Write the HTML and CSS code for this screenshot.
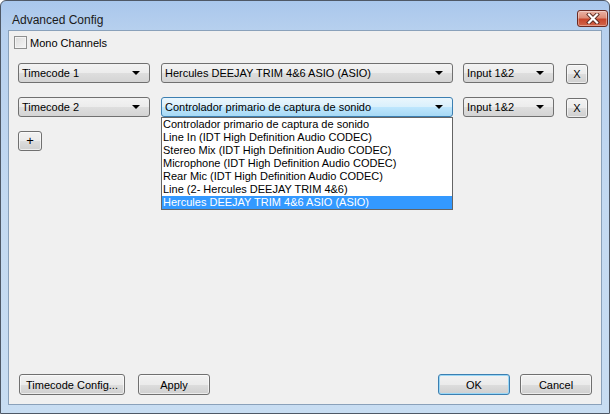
FILE: index.html
```html
<!DOCTYPE html>
<html>
<head>
<meta charset="utf-8">
<link rel="stylesheet" href="styles.css">
</head>
<body>
<div class="window">
  <div class="titlebar">
    <span class="title">Advanced Config</span>
    <div class="close">
      <svg width="16" height="11" viewBox="0 0 16 11">
        <path d="M4 1.5 L12 9.5 M12 1.5 L4 9.5" stroke="#5a2a22" stroke-width="4" stroke-linecap="square"/>
        <path d="M4 1.5 L12 9.5 M12 1.5 L4 9.5" stroke="#ffffff" stroke-width="2.2" stroke-linecap="square"/>
      </svg>
    </div>
  </div>
  <div class="client">
    <label class="check"><span class="box"></span>Mono Channels</label>

    <div class="row">
      <div class="combo c-tc"><span class="val">Timecode 1</span><i class="arrow"></i></div>
      <div class="combo c-dev"><span class="val">Hercules DEEJAY TRIM 4&amp;6 ASIO (ASIO)</span><i class="arrow"></i></div>
      <div class="combo c-in"><span class="val">Input 1&amp;2</span><i class="arrow"></i></div>
      <div class="btn xbtn">X</div>
    </div>

    <div class="row">
      <div class="combo c-tc"><span class="val">Timecode 2</span><i class="arrow"></i></div>
      <div class="combo c-dev open"><span class="val">Controlador primario de captura de sonido</span><i class="arrow"></i>
        <ul class="list">
          <li>Controlador primario de captura de sonido</li>
          <li>Line In (IDT High Definition Audio CODEC)</li>
          <li>Stereo Mix (IDT High Definition Audio CODEC)</li>
          <li>Microphone (IDT High Definition Audio CODEC)</li>
          <li>Rear Mic (IDT High Definition Audio CODEC)</li>
          <li>Line (2- Hercules DEEJAY TRIM 4&amp;6)</li>
          <li class="sel">Hercules DEEJAY TRIM 4&amp;6 ASIO (ASIO)</li>
        </ul>
      </div>
      <div class="combo c-in"><span class="val">Input 1&amp;2</span><i class="arrow"></i></div>
      <div class="btn xbtn">X</div>
    </div>

    <div class="btn plus">+</div>

    <div class="footer">
      <div class="left">
        <div class="btn b-tcc">Timecode Config...</div>
        <div class="btn b-apply">Apply</div>
      </div>
      <div class="right">
        <div class="btn b-ok default">OK</div>
        <div class="btn b-cancel">Cancel</div>
      </div>
    </div>
  </div>
</div>
</body>
</html>
```

FILE: styles.css
```css
* { box-sizing: border-box; }
html, body { margin: 0; padding: 0; }
body {
  width: 610px;
  height: 414px;
  overflow: hidden;
  background: #ffffff;
  font-family: "Liberation Sans", Arial, sans-serif;
  font-size: 11px;
  color: #000;
}
.window {
  width: 610px;
  height: 414px;
  border: 1px solid #4e5866;
  border-radius: 6px 6px 0 0;
  background: linear-gradient(180deg, #a9c7ec 0px, #b7d0ee 30px, #c3d9f1 200px, #c8ddf2 414px);
  padding: 0 7px 8px 7px;
  display: flex;
  flex-direction: column;
}
.titlebar {
  height: 29px;
  flex: none;
  display: flex;
  align-items: flex-start;
  justify-content: space-between;
}
.title {
  font-family: "Liberation Sans", Arial, sans-serif;
  font-size: 12px;
  margin: 12px 0 0 4px;
  color: #1a1a1a;
}
.close {
  width: 31px;
  height: 17px;
  margin: 9px -6px 0 0;
  border: 1px solid #6b2a22;
  border-radius: 3px;
  background: linear-gradient(180deg, #eab3a6 0%, #dd8d78 45%, #c8462c 55%, #d2654a 100%);
  box-shadow: inset 0 0 0 1px rgba(255,255,255,0.35);
  display: flex;
  align-items: center;
  justify-content: center;
}
.client {
  flex: 1;
  background: #f0f0f0;
  border: 1px solid #8aa1ba;
  padding: 5px 9px 9px 9px;
  display: flex;
  flex-direction: column;
}
.check {
  display: flex;
  align-items: center;
  height: 13px;
  margin-left: -4px;
  gap: 3px;
}
.box {
  width: 13px;
  height: 13px;
  border: 1px solid #8e8f8f;
  background: linear-gradient(135deg, #dcdcdc, #f6f6f6);
  box-shadow: inset 0 0 0 1px #f4f4f4;
}
.row {
  display: flex;
  align-items: flex-start;
  margin-top: 14px;
  height: 20px;
}
.combo {
  position: relative;
  height: 20px;
  border: 1px solid #707070;
  border-radius: 3px;
  background: linear-gradient(180deg, #f3f3f3 0%, #ececec 50%, #dedede 51%, #d4d4d4 100%);
  display: flex;
  align-items: center;
  padding-left: 3px;
}
.combo .val { line-height: 18px; white-space: nowrap; }
.arrow {
  position: absolute;
  right: 9px;
  top: 7px;
  width: 0;
  height: 0;
  border-left: 4px solid transparent;
  border-right: 4px solid transparent;
  border-top: 4px solid #000;
}
.c-tc { width: 132px; }
.c-dev { width: 292px; margin-left: 11px; }
.c-in { width: 91px; margin-left: 10px; }
.combo.open {
  border-color: #3c7fb1;
  background: linear-gradient(180deg, #eaf6fd 0%, #d9f0fc 50%, #bee6fd 51%, #a7d9f5 100%);
}
.list {
  position: absolute;
  left: -1px;
  top: 19px;
  width: 292px;
  margin: 0;
  padding: 0;
  list-style: none;
  background: #fff;
  border: 1px solid #646464;
  z-index: 5;
}
.list li {
  height: 13px;
  line-height: 13px;
  padding-left: 1px;
  white-space: nowrap;
}
.list li.sel {
  background: #3399ff;
  color: #fff;
}
.btn {
  height: 20px;
  border: 1px solid #707070;
  border-radius: 3px;
  background: linear-gradient(180deg, #f2f2f2 0%, #ebebeb 50%, #dddddd 51%, #cfcfcf 100%);
  box-shadow: inset 0 0 0 1px rgba(255,255,255,0.6);
  display: flex;
  align-items: center;
  justify-content: center;
  line-height: 18px;
}
.xbtn {
  width: 22px;
  margin-left: 12px;
  margin-top: 1px;
  font-size: 11px;
}
.plus {
  width: 24px;
  margin-top: 14px;
  font-size: 13px;
}
.footer {
  margin-top: auto;
  display: flex;
  justify-content: space-between;
  padding-left: 1px;
}
.footer .left, .footer .right { display: flex; }
.footer .btn { height: 21px; }
.b-tcc { width: 106px; }
.b-apply { width: 72px; margin-left: 13px; }
.b-ok { width: 72px; }
.b-cancel { width: 72px; margin-left: 10px; }
.btn.default {
  border-color: #3c7fb1;
  box-shadow: inset 0 0 0 1px #9ad7f6;
}
```
